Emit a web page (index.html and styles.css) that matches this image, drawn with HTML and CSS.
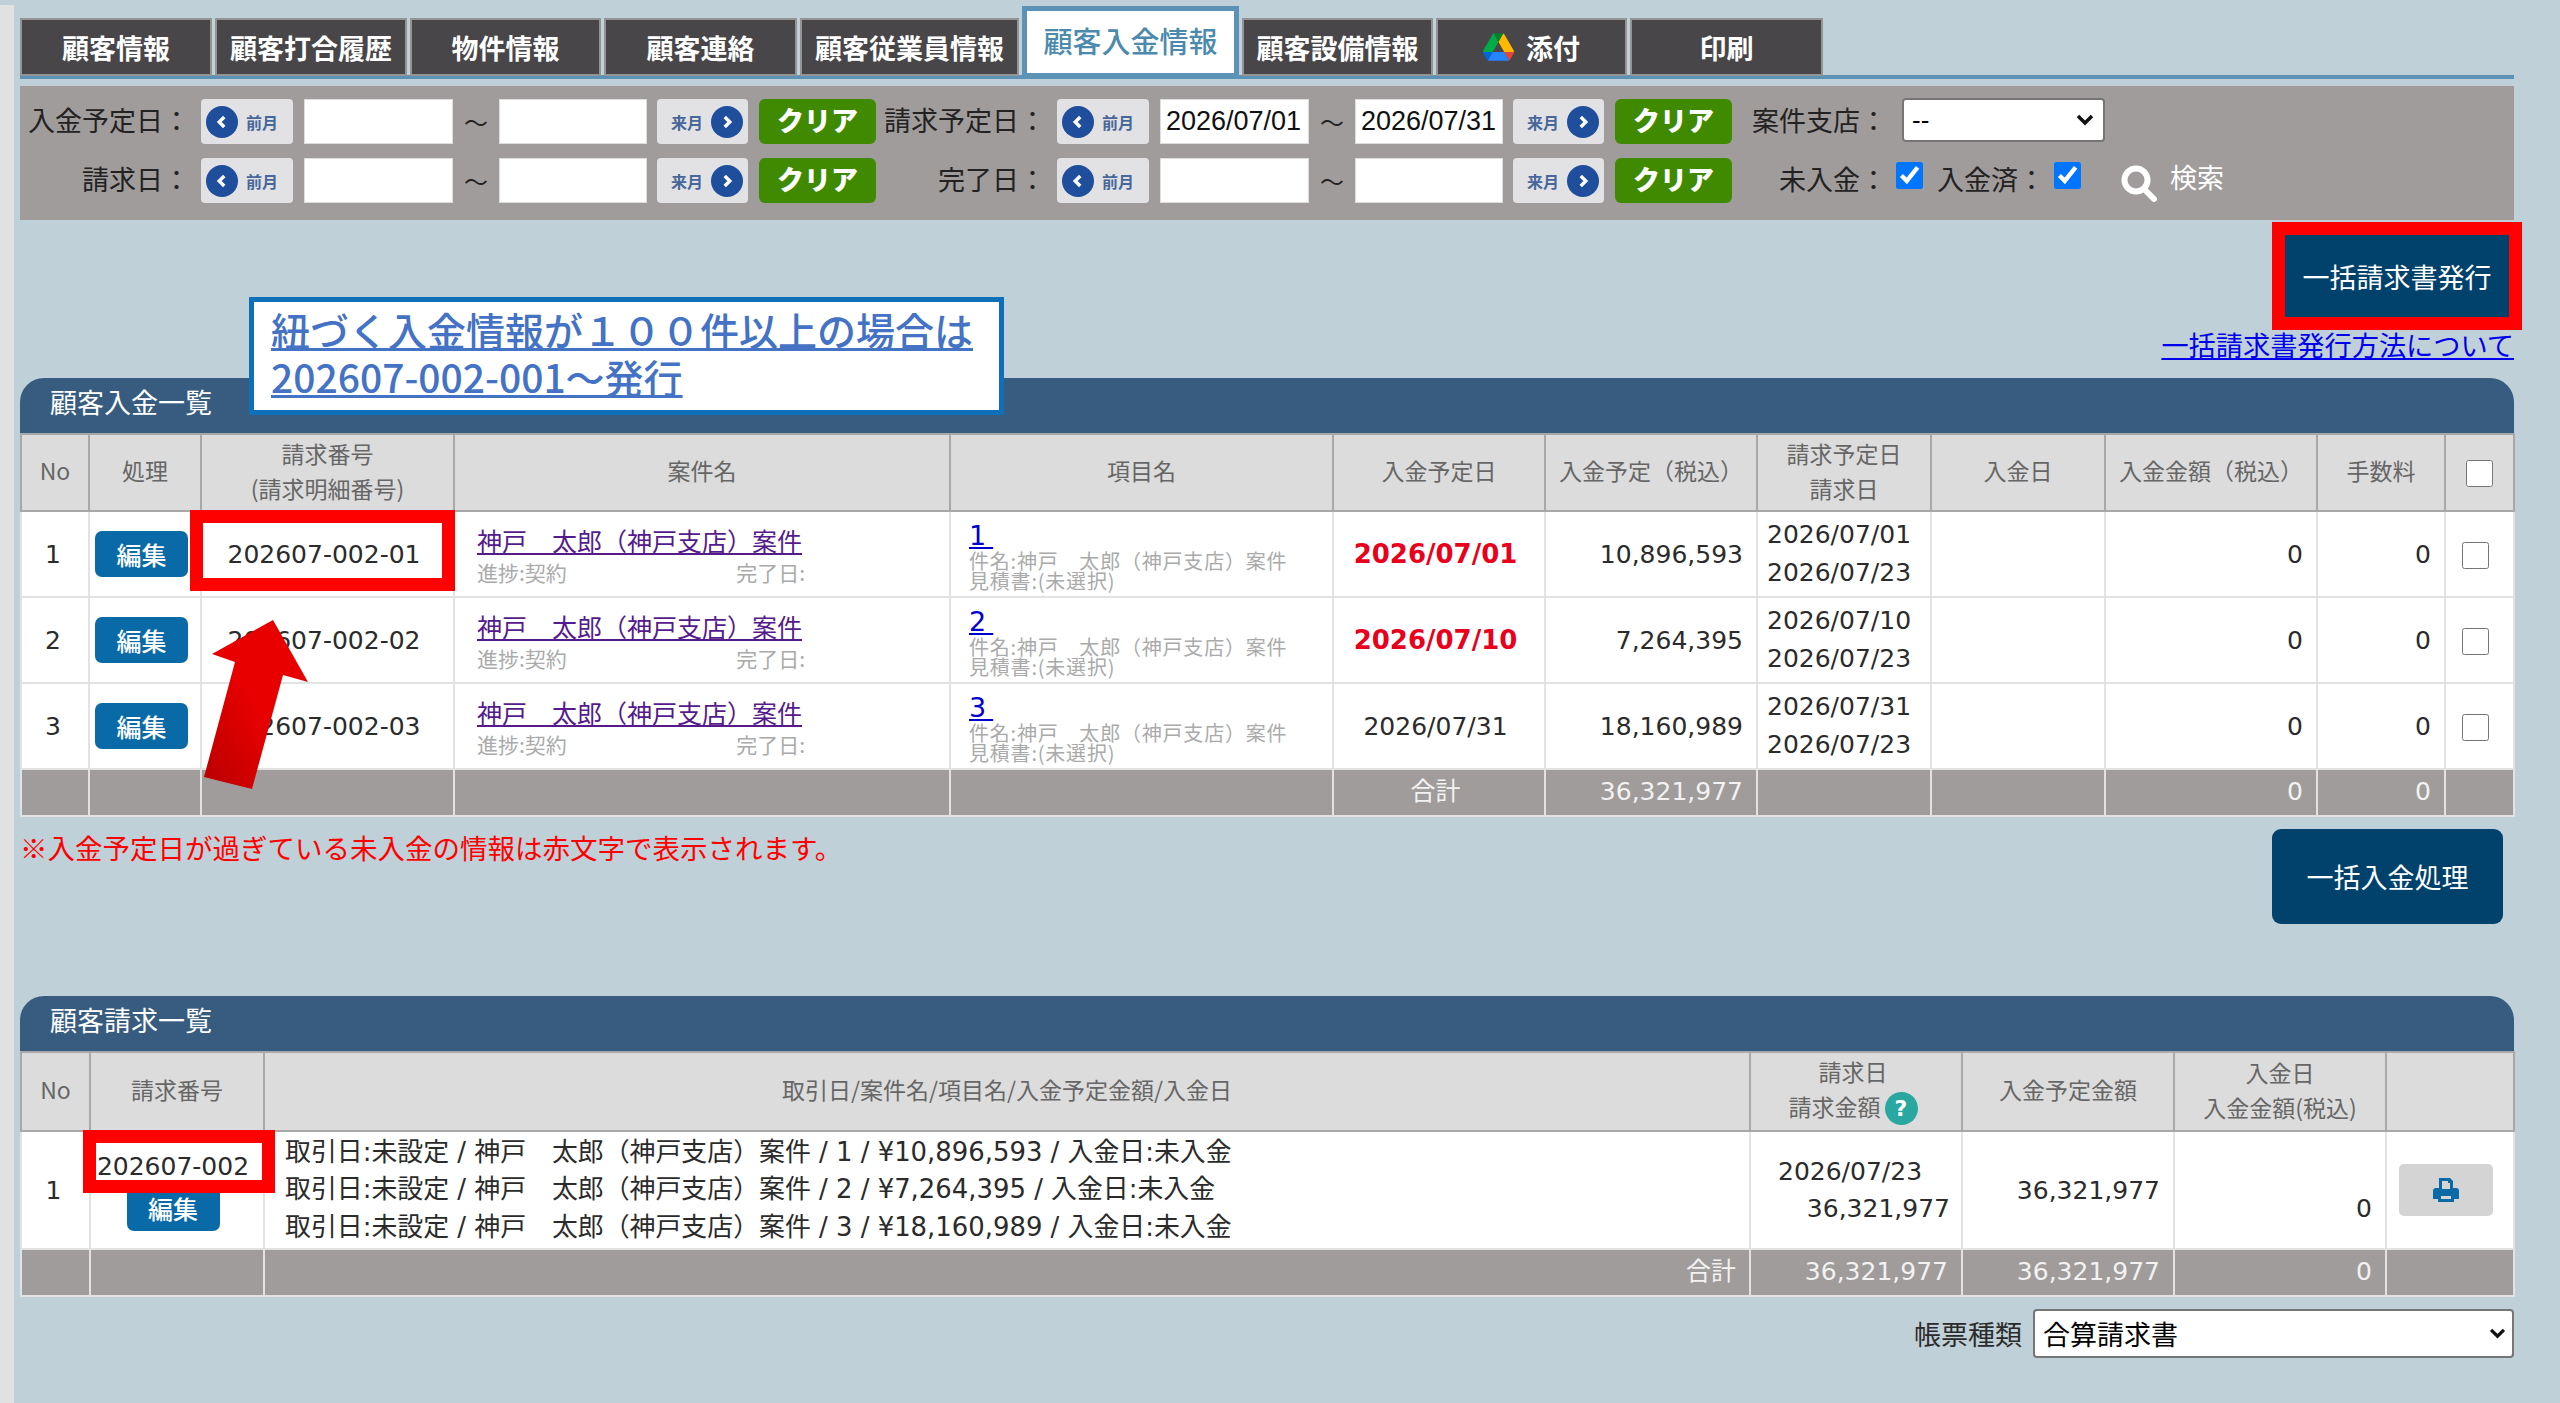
FILE: index.html
```html
<!DOCTYPE html>
<html lang="ja">
<head>
  <meta charset="UTF-8">
  <title>顧客入金情報</title>
  <link rel="stylesheet" href="styles.css">
</head>
<body>
  <div class="shell">
    <div class="side"></div>
    <div class="main">
      <div class="tabs">
        <div class="tab">顧客情報</div>
        <div class="tab">顧客打合履歴</div>
        <div class="tab">物件情報</div>
        <div class="tab">顧客連絡</div>
        <div class="tab">顧客従業員情報</div>
        <div class="tab tab-active">顧客入金情報</div>
        <div class="tab">顧客設備情報</div>
        <div class="tab">
          <svg class="drive-icon" viewBox="0 0 87.3 78">
            <path d="m6.6 66.85 3.85 6.65c.8 1.4 1.95 2.5 3.3 3.3l13.75-23.8h-27.5c0 1.55.4 3.1 1.2 4.5z" fill="#0066da"/>
            <path d="m43.65 25-13.75-23.8c-1.35.8-2.5 1.9-3.3 3.3l-25.4 44a9.06 9.06 0 0 0 -1.2 4.5h27.5z" fill="#00ac47"/>
            <path d="m73.55 76.8c1.35-.8 2.5-1.9 3.3-3.3l1.6-2.75 7.65-13.25c.8-1.4 1.2-2.95 1.2-4.5h-27.502l5.852 11.5z" fill="#ea4335"/>
            <path d="m43.65 25 13.75-23.8c-1.35-.8-2.9-1.2-4.5-1.2h-18.5c-1.6 0-3.15.45-4.5 1.2z" fill="#00832d"/>
            <path d="m59.8 53h-32.3l-13.75 23.8c1.35.8 2.9 1.2 4.5 1.2h50.8c1.6 0 3.15-.45 4.5-1.2z" fill="#2684fc"/>
            <path d="m73.4 26.5-12.7-22c-.8-1.4-1.95-2.5-3.3-3.3l-13.75 23.8 16.15 28h27.45c0-1.55-.4-3.1-1.2-4.5z" fill="#ffba00"/>
          </svg>
          添付
        </div>
        <div class="tab">印刷</div>
      </div>

      <div class="search">
        <div class="search-row">
          <span class="search-label">入金予定日：</span>
          <div class="range">
            <button class="month-btn"><span class="month-dot">
              <svg viewBox="0 0 16 16"><path d="M10 3.5 5.5 8l4.500 4.500"/></svg>
            </span>前月</button>
            <input class="date-input" type="text">
            <span class="tilde">～</span>
            <input class="date-input" type="text">
            <button class="month-btn month-next">来月<span class="month-dot">
              <svg viewBox="0 0 16 16"><path d="M6 3.500 10.500 8 6 12.500"/></svg>
            </span></button>
            <button class="clear-btn">クリア</button>
          </div>
          <span class="search-label">請求予定日：</span>
          <div class="range">
            <button class="month-btn"><span class="month-dot">
              <svg viewBox="0 0 16 16"><path d="M10 3.5 5.5 8l4.500 4.500"/></svg>
            </span>前月</button>
            <input class="date-input" type="text" value="2026/07/01">
            <span class="tilde">～</span>
            <input class="date-input" type="text" value="2026/07/31">
            <button class="month-btn month-next">来月<span class="month-dot">
              <svg viewBox="0 0 16 16"><path d="M6 3.500 10.500 8 6 12.500"/></svg>
            </span></button>
            <button class="clear-btn">クリア</button>
          </div>
          <span class="search-tail-label">案件支店：</span>
          <select class="branch-select"><option>--</option></select>
        </div>
        <div class="search-row">
          <span class="search-label">請求日：</span>
          <div class="range">
            <button class="month-btn"><span class="month-dot">
              <svg viewBox="0 0 16 16"><path d="M10 3.5 5.5 8l4.500 4.500"/></svg>
            </span>前月</button>
            <input class="date-input" type="text">
            <span class="tilde">～</span>
            <input class="date-input" type="text">
            <button class="month-btn month-next">来月<span class="month-dot">
              <svg viewBox="0 0 16 16"><path d="M6 3.500 10.500 8 6 12.500"/></svg>
            </span></button>
            <button class="clear-btn">クリア</button>
          </div>
          <span class="search-label">完了日：</span>
          <div class="range">
            <button class="month-btn"><span class="month-dot">
              <svg viewBox="0 0 16 16"><path d="M10 3.5 5.5 8l4.500 4.500"/></svg>
            </span>前月</button>
            <input class="date-input" type="text">
            <span class="tilde">～</span>
            <input class="date-input" type="text">
            <button class="month-btn month-next">来月<span class="month-dot">
              <svg viewBox="0 0 16 16"><path d="M6 3.500 10.500 8 6 12.500"/></svg>
            </span></button>
            <button class="clear-btn">クリア</button>
          </div>
          <span class="search-tail-label">未入金：</span>
          <input class="search-check" type="checkbox" checked>
          <span class="search-paid-label">入金済：</span>
          <input class="search-check" type="checkbox" checked>
          <svg class="search-icon" viewBox="0 0 38 38">
            <circle cx="15" cy="15" r="11.500"/>
            <path d="M23 24 33 34"/>
          </svg>
          <span class="search-text">検索</span>
        </div>
      </div>

      <div class="bulk-row">
        <button class="dark-btn bulk-issue">一括請求書発行</button>
      </div>
      <div class="help-row"><a class="help-link" href="#">一括請求書発行方法について</a></div>

      <div class="panel-head">顧客入金一覧</div>
      <table class="grid">
        <colgroup>
          <col class="w68"><col class="w112"><col class="w253"><col class="w496"><col class="w383"><col class="w212"><col class="w212"><col class="w174"><col class="w174"><col class="w212"><col class="w128"><col class="w69">
        </colgroup>
        <thead>
          <tr>
            <th>No</th>
            <th>処理</th>
            <th>請求番号<br>(請求明細番号)</th>
            <th>案件名</th>
            <th>項目名</th>
            <th>入金予定日</th>
            <th>入金予定（税込）</th>
            <th>請求予定日<br>請求日</th>
            <th>入金日</th>
            <th>入金金額（税込）</th>
            <th>手数料</th>
            <th><input class="row-check" type="checkbox"></th>
          </tr>
        </thead>
        <tbody>
          <tr>
            <td class="center shift-4">1</td>
            <td class="edit-cell"><button class="edit-btn">編集</button></td>
            <td class="center shift-7">202607-002-01</td>
            <td class="case-cell">
              <a class="case-link" href="#">神戸　太郎（神戸支店）案件</a>
              <div class="case-meta"><span>進捗:契約</span><span>完了日:</span></div>
            </td>
            <td class="item-cell">
              <a class="item-link" href="#">1</a>
              <div class="item-meta">件名:神戸　太郎（神戸支店）案件</div>
              <div class="item-meta">見積書:(未選択)</div>
            </td>
            <td class="center shift-7 late">2026/07/01</td>
            <td class="right">10,896,593</td>
            <td class="dates">2026/07/01<br>2026/07/23</td>
            <td></td>
            <td class="right">0</td>
            <td class="right">0</td>
            <td class="center shift-9"><input class="row-check" type="checkbox"></td>
          </tr>
          <tr>
            <td class="center shift-4">2</td>
            <td class="edit-cell"><button class="edit-btn">編集</button></td>
            <td class="center shift-7">202607-002-02</td>
            <td class="case-cell">
              <a class="case-link" href="#">神戸　太郎（神戸支店）案件</a>
              <div class="case-meta"><span>進捗:契約</span><span>完了日:</span></div>
            </td>
            <td class="item-cell">
              <a class="item-link" href="#">2</a>
              <div class="item-meta">件名:神戸　太郎（神戸支店）案件</div>
              <div class="item-meta">見積書:(未選択)</div>
            </td>
            <td class="center shift-7 late">2026/07/10</td>
            <td class="right">7,264,395</td>
            <td class="dates">2026/07/10<br>2026/07/23</td>
            <td></td>
            <td class="right">0</td>
            <td class="right">0</td>
            <td class="center shift-9"><input class="row-check" type="checkbox"></td>
          </tr>
          <tr>
            <td class="center shift-4">3</td>
            <td class="edit-cell"><button class="edit-btn">編集</button></td>
            <td class="center shift-7">202607-002-03</td>
            <td class="case-cell">
              <a class="case-link" href="#">神戸　太郎（神戸支店）案件</a>
              <div class="case-meta"><span>進捗:契約</span><span>完了日:</span></div>
            </td>
            <td class="item-cell">
              <a class="item-link" href="#">3</a>
              <div class="item-meta">件名:神戸　太郎（神戸支店）案件</div>
              <div class="item-meta">見積書:(未選択)</div>
            </td>
            <td class="center shift-7">2026/07/31</td>
            <td class="right">18,160,989</td>
            <td class="dates">2026/07/31<br>2026/07/23</td>
            <td></td>
            <td class="right">0</td>
            <td class="right">0</td>
            <td class="center shift-9"><input class="row-check" type="checkbox"></td>
          </tr>
        </tbody>
        <tfoot>
          <tr>
            <td></td><td></td><td></td><td></td><td></td>
            <td class="center shift-7 foot-label">合計</td>
            <td class="right">36,321,977</td>
            <td></td><td></td>
            <td class="right">0</td>
            <td class="right">0</td>
            <td></td>
          </tr>
        </tfoot>
      </table>

      <div class="after-table">
        <p class="late-note">※入金予定日が過ぎている未入金の情報は赤文字で表示されます。</p>
        <button class="dark-btn bulk-pay">一括入金処理</button>
      </div>

      <div class="panel-head panel-second">顧客請求一覧</div>
      <table class="grid grid-bill">
        <colgroup>
          <col class="w69"><col class="w174"><col class="w1486"><col class="w212"><col class="w212"><col class="w212"><col class="w128">
        </colgroup>
        <thead>
          <tr>
            <th>No</th>
            <th>請求番号</th>
            <th>取引日/案件名/項目名/入金予定金額/入金日</th>
            <th class="help-head">請求日<br>請求金額<span class="help-dot">?</span></th>
            <th>入金予定金額</th>
            <th>入金日<br>入金金額(税込)</th>
            <th></th>
          </tr>
        </thead>
        <tbody>
          <tr>
            <td class="center shift-4">1</td>
            <td class="center bill-no">
              <div>202607-002</div>
              <button class="edit-btn">編集</button>
            </td>
            <td class="bill-lines">
              取引日:未設定 / 神戸　太郎（神戸支店）案件 / 1 / ¥10,896,593 / 入金日:未入金<br>
              取引日:未設定 / 神戸　太郎（神戸支店）案件 / 2 / ¥7,264,395 / 入金日:未入金<br>
              取引日:未設定 / 神戸　太郎（神戸支店）案件 / 3 / ¥18,160,989 / 入金日:未入金
            </td>
            <td class="bill-date"><div class="bill-day">2026/07/23</div>36,321,977</td>
            <td class="right">36,321,977</td>
            <td class="right bill-paid">0</td>
            <td class="center shift-9">
              <button class="print-btn">
                <svg viewBox="0 0 28 28"><path fill-rule="evenodd" d="M7 2h11l3 3v7h3a3 3 0 0 1 3 3v8h-5v3H6v-3H1v-8a3 3 0 0 1 3-3h3zm3 3v8h8V7h-2V5zM9 20v3h10v-3z"/></svg>
              </button>
            </td>
          </tr>
        </tbody>
        <tfoot>
          <tr>
            <td></td><td></td>
            <td class="right foot-label">合計</td>
            <td class="right">36,321,977</td>
            <td class="right">36,321,977</td>
            <td class="right">0</td>
            <td></td>
          </tr>
        </tfoot>
      </table>

      <div class="form-row">
        <span class="form-label">帳票種類</span>
        <select class="form-select"><option>合算請求書</option></select>
      </div>
    </div>
  </div>

  <!-- annotations lying over the screen -->
  <div class="note-box">
    <a class="note-link" href="#">紐づく入金情報が１００件以上の場合は</a><br>
    <a class="note-link" href="#">202607-002-001～発行</a>
  </div>
  <div class="mark mark-issue"></div>
  <div class="mark mark-detail"></div>
  <div class="mark mark-bill"></div>
  <svg class="arrow" viewBox="0 0 120 180">
    <defs>
      <linearGradient id="arrow-fill" x1="0" y1="1" x2="0.5" y2="0.5">
        <stop offset="0" stop-color="#b80000"/>
        <stop offset="1" stop-color="#e80000"/>
      </linearGradient>
    </defs>
    <path d="M73 10 12 44 35 52 4 167 52 179 83 65 108 72z" fill="url(#arrow-fill)"/>
  </svg>
</body>
</html>
```

FILE: styles.css
```css
body {
  margin: 0;
  background: #bfd0d8;
  color: #2b2b2b;
  font-family: "DejaVu Sans", "Noto Sans CJK JP", sans-serif;
  font-size: 25px;
}

.shell {
  display: flex;
  min-height: 1403px;
}

.side {
  width: 14px;
  margin-top: 5px;
  background: #e0e1e1;
}

.main {
  width: 2494px;
  margin-left: 6px;
  padding-top: 6px;
}

/* tabs */
.tabs {
  display: grid;
  grid-template-columns: 192px 192px 191px 193px 219px 217px 191px 191px 193px;
  column-gap: 3px;
  align-items: start;
  height: 69px;
  border-bottom: 4px solid #5b92b5;
}

.tab {
  display: flex;
  align-items: center;
  justify-content: center;
  gap: 12px;
  box-sizing: border-box;
  height: 58px;
  margin-top: 12px;
  background: #484649;
  border: 2px solid #949494;
  color: #fff;
  font-family: "Noto Sans CJK JP", sans-serif;
  font-size: 27px;
  font-weight: 700;
  white-space: nowrap;
}

.tab-active {
  position: relative;
  height: 72px;
  margin-top: 0;
  padding-bottom: 4px;
  background: #fff;
  border: 5px solid #5b92b5;
  color: #4b89ad;
  font-size: 29px;
  font-weight: 500;
}

.drive-icon {
  width: 31px;
  height: 28px;
}

/* search panel */
.search {
  box-sizing: border-box;
  height: 134px;
  margin-top: 7px;
  padding-top: 13px;
  background: #a09c9c;
  font-family: "Noto Sans CJK JP", sans-serif;
  font-size: 27px;
  color: #222;
}

.search-row {
  display: flex;
  align-items: center;
  height: 45px;
  margin-bottom: 14px;
}

.search-label {
  width: 170px;
  margin-right: 11px;
  padding-bottom: 5px;
  text-align: right;
  white-space: nowrap;
}

.range {
  display: flex;
  align-items: center;
  width: 675px;
}

.month-btn {
  display: flex;
  align-items: center;
  gap: 8px;
  box-sizing: border-box;
  width: 92px;
  height: 45px;
  margin-right: 11px;
  padding: 0 5px;
  background: #e2e2e4;
  border: none;
  border-radius: 4px;
  color: #47679a;
  font-family: "Noto Sans CJK JP", sans-serif;
  font-size: 16px;
  font-weight: 700;
}

.month-next {
  width: 91px;
  margin-left: 10px;
  margin-right: 11px;
  justify-content: flex-end;
}

.month-dot {
  display: flex;
  align-items: center;
  justify-content: center;
  width: 32px;
  height: 32px;
  border-radius: 50%;
  background: #1f4e9c;
}

.month-dot svg {
  width: 18px;
  height: 18px;
  fill: none;
  stroke: #fff;
  stroke-width: 3;
}

.date-input {
  box-sizing: border-box;
  width: 149px;
  height: 45px;
  padding: 0 0 0 5px;
  background: #fff;
  border: 1px solid #ddd;
  color: #111;
  font-family: "Liberation Sans", sans-serif;
  font-size: 27px;
}

.tilde {
  width: 46px;
  text-align: center;
  font-size: 24px;
}

.range .tilde + .date-input {
  width: 148px;
}

.clear-btn {
  width: 117px;
  height: 45px;
  padding: 0 0 5px;
  background: #3f8a00;
  border: none;
  border-radius: 6px;
  color: #fff;
  font-family: "Noto Sans CJK JP", sans-serif;
  font-size: 27px;
  font-weight: 900;
}

.search-tail-label {
  width: 155px;
  padding-bottom: 5px;
  text-align: right;
  white-space: nowrap;
}

.branch-select {
  appearance: none;
  box-sizing: border-box;
  width: 203px;
  height: 44px;
  margin: -4px 0 0 15px;
  padding-left: 8px;
  background: #fff url("data:image/svg+xml,%3Csvg xmlns='http://www.w3.org/2000/svg' viewBox='0 0 18 12'%3E%3Cpath d='M2 2l7 7 7-7' fill='none' stroke='%23111' stroke-width='3.500'/%3E%3C/svg%3E") no-repeat right 9px center / 18px 12px;
  border: 2px solid #767676;
  border-radius: 4px;
  font-family: "Liberation Sans", sans-serif;
  font-size: 26px;
}

.search-check {
  width: 27px;
  height: 27px;
  margin: -10px 0 0 9px;
}

.search-paid-label {
  width: 108px;
  margin-left: 14px;
  padding-bottom: 5px;
  white-space: nowrap;
}

.search-icon {
  width: 38px;
  height: 38px;
  margin: 6px 0 0 40px;
  fill: none;
  stroke: #fff;
  stroke-width: 6;
  stroke-linecap: round;
}

.search-text {
  margin: -8px 0 0 11px;
  color: #fff;
  font-size: 27px;
}

/* bulk buttons */
.bulk-row {
  display: flex;
  justify-content: flex-end;
  margin-top: 15px;
  padding-right: 5px;
}

.dark-btn {
  background: #00426c;
  border: none;
  color: #fff;
  font-family: "Noto Sans CJK JP", sans-serif;
  font-size: 27px;
  padding: 0;
}

.bulk-issue {
  width: 224px;
  height: 83px;
}

.bulk-pay {
  width: 231px;
  height: 95px;
  margin: 12px 11px 0 0;
  border-radius: 9px;
}

.help-row {
  margin-top: 11px;
  text-align: right;
  font-family: "Noto Sans CJK JP", sans-serif;
  line-height: 30px;
}

.help-link {
  color: #0000ee;
  font-size: 27.200px;
}

/* panels and tables */
.panel-head {
  box-sizing: border-box;
  height: 55px;
  margin-top: 18px;
  padding-left: 30px;
  background: #375c80;
  border-radius: 24px 24px 0 0;
  color: #fff;
  font-family: "Noto Sans CJK JP", sans-serif;
  font-size: 27px;
  line-height: 48px;
}

.panel-second {
  margin-top: 72px;
}

.grid {
  width: 2494px;
  table-layout: fixed;
  border-collapse: collapse;
}

.w68 { width: 68px; }
.w69 { width: 69px; }
.w112 { width: 112px; }
.w128 { width: 128px; }
.w174 { width: 174px; }
.w212 { width: 212px; }
.w253 { width: 253px; }
.w383 { width: 383px; }
.w496 { width: 496px; }
.w1486 { width: 1486px; }

.grid th {
  box-sizing: border-box;
  height: 77px;
  padding: 0 0 4px;
  background: #dcdcdc;
  border: 2px solid #a8a8a8;
  color: #666;
  font-family: "Noto Sans CJK JP", sans-serif;
  font-size: 23px;
  font-weight: 400;
  line-height: 35px;
}

.grid td {
  box-sizing: border-box;
  height: 86px;
  padding: 0 13px;
  background: #fff;
  border: 2px solid #e2e2e2;
  white-space: nowrap;
}

.grid tfoot td {
  height: 47px;
  padding-bottom: 3px;
  background: #a09c9c;
  color: #f2f2f2;
}

.grid .center {
  text-align: center;
  padding: 0;
}

.grid .shift-4 { padding-right: 4px; }
.grid .shift-7 { padding-right: 7px; }
.grid .shift-9 { padding-right: 9px; }

.grid .right {
  text-align: right;
}

.grid tfoot .foot-label {
  padding-bottom: 7px;
}

.grid .late {
  color: #e8001c;
  font-size: 26px;
  font-weight: 700;
}

.grid .dates {
  padding: 0 0 0 9px;
  line-height: 38px;
}

.grid .edit-cell {
  padding: 0 0 0 5px;
}

.edit-btn {
  width: 93px;
  height: 46px;
  padding: 0;
  background: #0a6aa8;
  border: none;
  border-radius: 7px;
  color: #fff;
  font-family: "Noto Sans CJK JP", sans-serif;
  font-size: 25px;
  font-weight: 500;
}

.grid .case-cell {
  padding: 4px 0 0 22px;
}

.case-link {
  display: inline-block;
  color: #551a8b;
  font-family: "Noto Sans CJK JP", sans-serif;
  font-size: 25px;
  line-height: 30px;
}

.case-meta {
  display: flex;
  justify-content: space-between;
  width: 328px;
  color: #aaa;
  font-family: "Noto Sans CJK JP", sans-serif;
  font-size: 21px;
  line-height: 30px;
}

.grid .item-cell {
  padding: 5px 0 0 18px;
}

.item-link {
  display: block;
  width: 26px;
  margin-bottom: 1px;
  color: #0000cc;
  font-size: 27px;
  letter-spacing: 7px;
  line-height: 28px;
}

.item-meta {
  color: #aaa;
  font-family: "Noto Sans CJK JP", sans-serif;
  font-size: 20px;
  line-height: 20px;
  white-space: nowrap;
  letter-spacing: 0.800px;
}

.row-check {
  width: 27px;
  height: 27px;
  margin: 0;
  vertical-align: middle;
}

.after-table {
  display: flex;
  justify-content: space-between;
  align-items: flex-start;
}

.late-note {
  margin: 14px 0 0;
  color: #f00;
  font-family: "Noto Sans CJK JP", sans-serif;
  font-size: 27.500px;
  line-height: 32px;
}

.grid-bill th {
  height: 79px;
}

.grid .help-head {
  padding-right: 6px;
}

.help-dot {
  display: inline-block;
  width: 33px;
  height: 33px;
  margin-left: 4px;
  background: #2aa7a0;
  border-radius: 50%;
  color: #fff;
  font-family: "DejaVu Sans", sans-serif;
  font-size: 22px;
  font-weight: 700;
  line-height: 33px;
}

.grid-bill tbody td {
  height: 118px;
}

.grid .bill-no {
  vertical-align: top;
  line-height: 37px;
  padding: 16px 8px 0 0;
}

.bill-no .edit-btn {
  display: block;
  margin: 0 auto;
}

.grid .bill-lines {
  padding-left: 20px;
  font-size: 25.900px;
  line-height: 37.500px;
}

.grid .bill-date {
  padding: 0 11px 0 0;
  text-align: right;
  line-height: 37px;
}

.bill-day {
  padding-left: 27px;
  text-align: left;
}

.grid .bill-paid {
  padding-top: 37px;
}

.print-btn {
  width: 94px;
  height: 52px;
  padding: 0;
  background: #d4d4d4;
  border: none;
  border-radius: 5px;
}

.print-btn svg {
  width: 28px;
  height: 28px;
  margin-top: 3px;
  fill: #0a6aa8;
}

.form-row {
  display: flex;
  justify-content: flex-end;
  align-items: center;
  gap: 11px;
  margin-top: 12px;
}

.form-label {
  font-family: "Noto Sans CJK JP", sans-serif;
  font-size: 27px;
}

.form-select {
  appearance: none;
  box-sizing: border-box;
  width: 481px;
  height: 49px;
  padding-left: 8px;
  background: #fff url("data:image/svg+xml,%3Csvg xmlns='http://www.w3.org/2000/svg' viewBox='0 0 18 12'%3E%3Cpath d='M2 2l7 7 7-7' fill='none' stroke='%23111' stroke-width='3.500'/%3E%3C/svg%3E") no-repeat right 6px center / 17px 11px;
  border: 2px solid #767676;
  border-radius: 4px;
  font-family: "Noto Sans CJK JP", sans-serif;
  font-size: 27px;
}

/* annotations */
.note-box {
  position: absolute;
  left: 249px;
  top: 297px;
  box-sizing: border-box;
  width: 755px;
  height: 118px;
  padding: 4px 0 0 17px;
  background: #fff;
  border: 5px solid #0d70b8;
  font-family: "Noto Sans CJK JP", sans-serif;
  font-size: 39px;
  font-weight: 500;
  line-height: 47px;
}

.note-link {
  color: #4472c4;
}

.mark {
  position: absolute;
  box-sizing: border-box;
  border: 13px solid #f00;
}

.mark-issue {
  left: 2272px;
  top: 222px;
  width: 250px;
  height: 108px;
}

.mark-detail {
  left: 190px;
  top: 510px;
  width: 265px;
  height: 81px;
}

.mark-bill {
  left: 83px;
  top: 1130px;
  width: 192px;
  height: 63px;
}

.arrow {
  position: absolute;
  left: 200px;
  top: 610px;
  width: 120px;
  height: 180px;
}
```
